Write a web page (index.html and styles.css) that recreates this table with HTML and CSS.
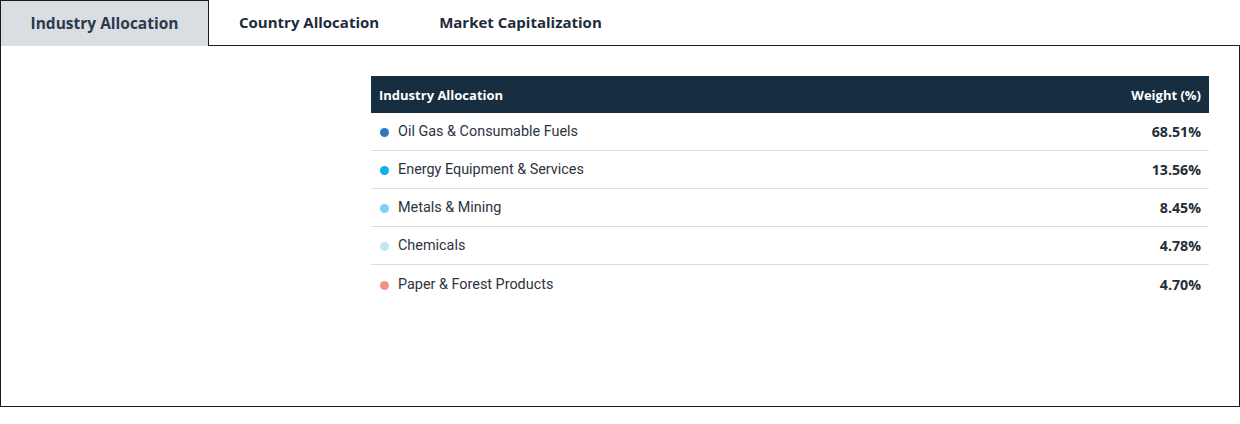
FILE: index.html
```html
<!DOCTYPE html>
<html>
<head>
<meta charset="utf-8">
<link rel="stylesheet" href="styles.css">
</head>
<body>
<div class="tabs">
  <div class="tab active">Industry Allocation</div>
  <div class="tab">Country Allocation</div>
  <div class="tab">Market Capitalization</div>
</div>
<div class="panel">
  <div class="chart"></div>
  <div class="table">
    <div class="thead">
      <span>Industry Allocation</span>
      <span>Weight (%)</span>
    </div>
    <div class="row"><span class="label"><i class="dot c1"></i>Oil Gas &amp; Consumable Fuels</span><span class="val">68.51%</span></div>
    <div class="row"><span class="label"><i class="dot c2"></i>Energy Equipment &amp; Services</span><span class="val">13.56%</span></div>
    <div class="row"><span class="label"><i class="dot c3"></i>Metals &amp; Mining</span><span class="val">8.45%</span></div>
    <div class="row"><span class="label"><i class="dot c4"></i>Chemicals</span><span class="val">4.78%</span></div>
    <div class="row last"><span class="label"><i class="dot c5"></i>Paper &amp; Forest Products</span><span class="val">4.70%</span></div>
  </div>
</div>
</body>
</html>
```

FILE: styles.css
```css
html, body {
  margin: 0;
  padding: 0;
  background: #fff;
  font-family: Roboto, "Liberation Sans", sans-serif;
}
.tabs {
  display: flex;
  height: 45px;
  position: relative;
  z-index: 1;
}
.tab {
  box-sizing: border-box;
  height: 45px;
  padding: 0 30px 2px 30px;
  display: flex;
  align-items: center;
  font-family: "Open Sans", Roboto, sans-serif;
  font-size: 15px;
  font-weight: 700;
  color: #1e2b3a;
}
.tab.active {
  width: 209px;
  height: 46px;
  justify-content: center;
  padding: 0 0 2px 0;
  background: #dadee2;
  border: 1px solid #1a1a1a;
  border-bottom: none;
  font-size: 15.5px;
  color: #2a3a4c;
}
.panel {
  box-sizing: border-box;
  width: 1240px;
  height: 362px;
  border: 1px solid #1a1a1a;
  padding: 30px 30px 0 30px;
  display: grid;
  grid-template-columns: 340px 838px;
  align-content: start;
}
.table {
  font-size: 14.4px;
  color: #2c3440;
}
.thead {
  height: 37px;
  background: #172d40;
  color: #fff;
  font-family: "Open Sans", Roboto, sans-serif;
  font-weight: 700;
  font-size: 13px;
  display: flex;
  justify-content: space-between;
  align-items: center;
  padding: 0 8px;
}
.row {
  box-sizing: border-box;
  height: 38px;
  border-bottom: 1px solid #dedede;
  display: flex;
  justify-content: space-between;
  align-items: center;
  padding: 0 8px 0 9px;
}
.row.last {
  border-bottom: none;
}
.label {
  display: flex;
  align-items: center;
}
.dot {
  width: 9px;
  height: 9px;
  border-radius: 50%;
  margin-right: 9px;
  margin-top: 2px;
}
.c1 { background: #2f78c0; }
.c2 { background: #0db1ef; }
.c3 { background: #7cd1f5; }
.c4 { background: #c3e6f2; }
.c5 { background: #f78f88; }
.val {
  font-family: "Open Sans", Roboto, sans-serif;
  font-size: 14.2px;
  font-weight: 700;
  color: #252d38;
}
```
